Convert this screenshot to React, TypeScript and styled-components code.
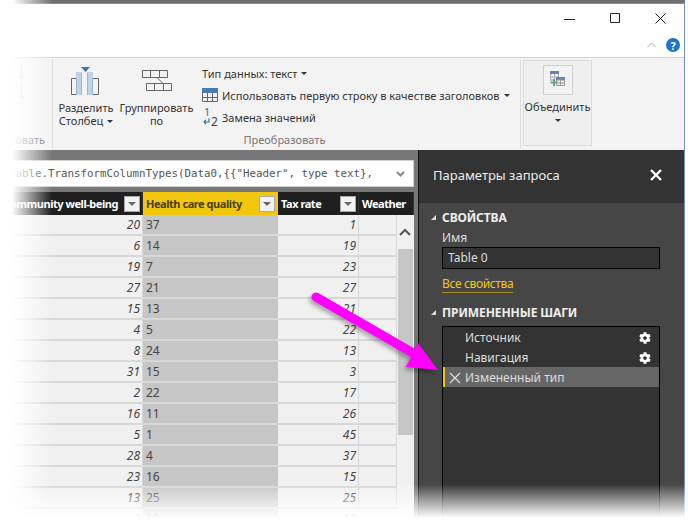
import React from 'react';
import styled, { createGlobalStyle } from 'styled-components';
import { FaCog } from 'react-icons/fa';

const GlobalStyle = createGlobalStyle`
  html, body {
    margin: 0;
    padding: 0;
    background: #fff;
  }
  * {
    box-sizing: border-box;
  }
`;

const UI_FONT = `"Noto Sans", "Open Sans", sans-serif`;

const Page = styled.div`
  position: relative;
  width: 688px;
  height: 524px;
  overflow: hidden;
  background: #fff;
  font-family: ${UI_FONT};
  color: #444;
`;

const Frame = styled.div`
  display: flex;
  flex-direction: column;
  width: 685px;
  height: 524px;
  border-top: 3px solid #6e7073;
  border-right: 1px solid #6d8fd0;
`;

const TitleBar = styled.div`
  display: flex;
  flex-direction: column;
  flex-shrink: 0;
  height: 54px;
  border-top: 1px solid #6d8fd0;
  background: #fff;
`;

const WindowButtons = styled.div`
  display: flex;
  justify-content: flex-end;
  gap: 35px;
  height: 31px;
  padding: 9px 18px 0 0;
`;

const TabRow = styled.div`
  display: flex;
  justify-content: flex-end;
  align-items: center;
  gap: 10px;
  height: 21px;
  padding: 0 4px 1px 0;
`;

const HelpBadge = styled.div`
  display: flex;
  align-items: center;
  justify-content: center;
  width: 14px;
  height: 14px;
  border-radius: 50%;
  background: #1d74c9;
  color: #fff;
  font-size: 11px;
  font-weight: 700;
  line-height: 1;
`;

const Ribbon = styled.div`
  display: flex;
  flex-shrink: 0;
  height: 93px;
  padding: 2px 0 2px;
  border-top: 1px solid #d4d4d4;
  background: #f3f3f3;
`;

const FadedGroup = styled.div`
  display: flex;
  flex-direction: column;
  justify-content: space-between;
  align-items: flex-end;
  width: 53px;
  padding: 5px 7px 0 0;
  border-right: 1px solid #dcdcdc;
`;

const FadedArrows = styled.div`
  display: flex;
  flex-direction: column;
  gap: 4px;
  margin-right: 20px;
`;

const GroupLabel = styled.div<{ $shift?: number }>`
  height: 16px;
  padding-right: ${p => p.$shift || 0}px;
  font-size: 11px;
  line-height: 15px;
  color: #777;
  text-align: center;
`;

const TransformGroup = styled.div`
  display: flex;
  flex-direction: column;
  justify-content: space-between;
  width: 468px;
  border-right: 1px solid #dcdcdc;
`;

const TransformBody = styled.div`
  display: flex;
`;

const BigButton = styled.div<{ $width: number }>`
  display: flex;
  flex-direction: column;
  align-items: center;
  width: ${p => p.$width}px;
  height: 70px;
  font-size: 11px;
  line-height: 13px;
  color: #333;
  text-align: center;
`;

const BigIcon = styled.div<{ $lift?: number }>`
  display: flex;
  align-items: flex-end;
  justify-content: center;
  height: 36px;
  margin-bottom: 5px;
  padding-bottom: ${p => p.$lift || 0}px;
`;

const Caret = styled.span`
  display: inline-block;
  width: 0;
  height: 0;
  margin-left: 4px;
  vertical-align: 2px;
  border-left: 3px solid transparent;
  border-right: 3px solid transparent;
  border-top: 3px solid #333;
`;

const MergeCaret = styled(Caret)`
  margin-left: 0;
`;

const SmallButtons = styled.div`
  display: flex;
  flex-direction: column;
  padding: 2px 0 0 8px;
`;

const SmallButton = styled.div`
  display: flex;
  align-items: center;
  gap: 4px;
  height: 22px;
  font-size: 11px;
  color: #333;
  white-space: nowrap;

  ${Caret} {
    margin-left: 0;
  }
`;

const MergeGroup = styled.div`
  display: flex;
  flex-direction: column;
  align-items: center;
  width: 69px;
  height: 86px;
  margin-left: 2px;
  padding-top: 4px;
  border: 1px solid #dcdcdc;
  background: #efefef;
  font-size: 11px;
  line-height: 13px;
  color: #333;
`;

const MergeIconBox = styled.div`
  display: flex;
  align-items: flex-start;
  justify-content: center;
  flex-shrink: 0;
  width: 30px;
  height: 30px;
  margin-bottom: 5px;
  padding-top: 4px;
  border: 1px solid #cfcfcf;
  background: #f3f3f3;
`;

const Main = styled.div`
  display: flex;
  flex: 1;
  min-height: 0;
`;

const Editor = styled.div`
  display: flex;
  flex-direction: column;
  width: 418px;
  padding-right: 4px;
  background: #777;
`;

const FormulaBar = styled.div`
  display: flex;
  align-items: center;
  justify-content: space-between;
  height: 27px;
  margin-top: 10px;
  padding: 0 8px;
  border: 1px solid #d0d0d0;
  background: #fff;
  font-family: "DejaVu Sans Mono", "Liberation Mono", monospace;
  font-size: 10.8px;
  color: #555;
  white-space: nowrap;
`;

const TableWrap = styled.div`
  position: relative;
  flex: 1;
  min-height: 0;
  margin-top: 5px;
  overflow: hidden;
  background: #f0f0f0;
`;

const HeadRow = styled.div`
  display: grid;
  grid-template-columns: 143px 135px 81px 55px;
  height: 23px;
  background: #1f1f1f;
`;

const HeadCell = styled.div<{ $active?: boolean }>`
  display: flex;
  align-items: center;
  justify-content: space-between;
  min-width: 0;
  padding: 0 2px 0 3px;
  border-right: 1px solid ${p => (p.$active ? '#f2c80f' : '#333')};
  background: ${p => (p.$active ? '#f2c80f' : 'transparent')};
  color: ${p => (p.$active ? '#4a3f08' : '#fff')};
  font-size: 11px;
  font-weight: 700;
  letter-spacing: -0.45px;
  white-space: nowrap;
  overflow: hidden;
`;

const HeadCommunity = styled(HeadCell)`
  justify-content: flex-end;
  gap: 6px;
`;

const FilterButton = styled.div`
  display: flex;
  flex-shrink: 0;
  align-items: center;
  justify-content: center;
  width: 16px;
  height: 16px;
  border: 1px solid #aaa;
  background: #f2f2f2;

  &::after {
    content: '';
    border-left: 4px solid transparent;
    border-right: 4px solid transparent;
    border-top: 4px solid #666;
  }
`;

const Row = styled.div`
  display: grid;
  grid-template-columns: 143px 135px 81px 38px;
  width: 397px;
  height: 21px;
  border-bottom: 2px solid #d8d8d8;
`;

const NumCell = styled.div<{ $selected?: boolean }>`
  padding: ${p => (p.$selected ? '0 0 0 3px' : '0 2px 0 0')};
  border-right: ${p => (p.$selected ? 'none' : '1px solid #d8d8d8')};
  background: ${p => (p.$selected ? '#c6c6c6' : 'transparent')};
  font-size: 12px;
  font-style: ${p => (p.$selected ? 'normal' : 'italic')};
  line-height: 19px;
  text-align: ${p => (p.$selected ? 'left' : 'right')};
  color: #444;
`;

const ScrollUp = styled.div`
  position: absolute;
  top: 36px;
  left: 399px;
  display: flex;
`;

const ScrollThumb = styled.div`
  position: absolute;
  top: 57px;
  left: 398px;
  width: 15px;
  height: 186px;
  background: #c6c6c6;
`;

const Panel = styled.div`
  display: flex;
  flex-direction: column;
  flex: 1;
  min-width: 0;
  border-left: 1px solid #111;
  background: #464646;
`;

const PanelHead = styled.div`
  display: flex;
  align-items: center;
  justify-content: space-between;
  flex-shrink: 0;
  height: 53px;
  padding: 0 22px 3px 14px;
  background: #333;
  color: #eee;
  font-size: 13px;
`;

const PanelBody = styled.div`
  display: flex;
  flex-direction: column;
  flex: 1;
  min-height: 0;
  padding: 5px 24px 0 12px;
`;

const SectionTitle = styled.div`
  display: flex;
  align-items: center;
  gap: 6px;
  height: 18px;
  color: #eee;
  font-size: 12px;
  font-weight: 700;
  letter-spacing: -0.1px;

  &::before {
    content: '';
    border-left: 5px solid transparent;
    border-bottom: 5px solid #ddd;
  }
`;

const FieldLabel = styled.div`
  margin: 3px 0 0 11px;
  color: #ddd;
  font-size: 12px;
  line-height: 18px;
`;

const NameInput = styled.div`
  flex-shrink: 0;
  height: 22px;
  margin: 0 0 0 11px;
  padding-left: 5px;
  border: 1px solid #000;
  background: #333;
  color: #ddd;
  font-size: 12px;
  line-height: 20px;
`;

const AllProps = styled.a`
  align-self: flex-start;
  margin: 7px 0 10px 11px;
  border-bottom: 1px solid #a58c1c;
  color: #f2c80f;
  font-size: 12px;
  letter-spacing: -0.35px;
  line-height: 16px;
`;

const Steps = styled.div`
  flex: 1;
  min-height: 0;
  margin: 5px 0 0 11px;
  border: 1px solid #000;
  border-bottom: none;
  background: #333;
`;

const Step = styled.div<{ $current?: boolean }>`
  display: flex;
  align-items: center;
  justify-content: space-between;
  height: 20px;
  padding: 1px 8px 0 ${p => (p.$current ? '4px' : '22px')};
  border-left: ${p => (p.$current ? '2px solid #f2c80f' : 'none')};
  background: ${p => (p.$current ? '#666' : 'transparent')};
  color: #ddd;
  font-size: 12px;
`;

const StepName = styled.div`
  display: flex;
  align-items: center;
  gap: 4px;
`;

const FadeLeft = styled.div`
  position: absolute;
  top: 0;
  left: 0;
  width: 52px;
  height: 100%;
  background: linear-gradient(to right, #fff 12px, rgba(255, 255, 255, 0));
  pointer-events: none;
`;

const FadeBottom = styled.div`
  position: absolute;
  left: 0;
  bottom: 0;
  width: 100%;
  height: 40px;
  background: linear-gradient(to bottom, rgba(255, 255, 255, 0), #fff 34px);
  pointer-events: none;
`;

const Arrow = styled.svg`
  position: absolute;
  top: 285px;
  left: 305px;
  filter: drop-shadow(-2px 3px 2px rgba(0, 0, 0, 0.3));
`;

const community = [20, 6, 19, 27, 15, 4, 8, 31, 2, 16, 5, 28, 23, 13, 2];
const health = [37, 14, 7, 21, 13, 5, 24, 15, 22, 11, 1, 4, 16, 25, 10];
const tax = [1, 19, 23, 27, 21, 22, 13, 3, 17, 26, 45, 37, 15, 25, 12];

const SplitIcon = () => (
  <svg width="30" height="30" viewBox="0 0 30 30">
    <path d="M10 1h9l-4.5 5z" fill="#3f74a8" />
    <rect x="5" y="6" width="6" height="23" fill="#bdd3e8" />
    <rect x="16" y="6" width="6" height="23" fill="#bdd3e8" />
    <path d="M.5 12.5h5v16h-5zM21.5 12.5h6v16h-6z" fill="none" stroke="#666" />
    <path d="M5.5 12v17M10.5 7v22M16.5 7v22M21.5 12v17" stroke="#9db6cc" fill="none" />
  </svg>
);

const GroupIcon = () => (
  <svg width="30" height="21" viewBox="0 0 30 21">
    <path
      d="M.5 .5h25v7h-25zM8.5 .5v7M17.5 .5v7M4.5 13.5h25v7h-25zM12.5 13.5v7M21.5 13.5v7M15 7.5l6 6"
      fill="none"
      stroke="#666"
    />
  </svg>
);

const HeaderRowIcon = () => (
  <svg width="16" height="14" viewBox="0 0 16 14">
    <rect width="16" height="5" fill="#4a7ab0" />
    <path d="M.5 5v8.5h15V5M.5 9.5h15M5.5 5v8.5M10.5 5v8.5" fill="none" stroke="#666" />
  </svg>
);

const ReplaceIcon = () => (
  <svg width="16" height="22" viewBox="0 0 16 22">
    <text x="2" y="10" fontSize="11" fontFamily="Noto Sans, sans-serif" fill="#666">1</text>
    <text x="9" y="20" fontSize="12" fontFamily="Noto Sans, sans-serif" fill="#444">2</text>
    <path d="M7 12.5v3.5H2M4 14l-2 2 2 2" fill="none" stroke="#2a74b8" strokeWidth="1.2" />
  </svg>
);

const MergeIcon = () => (
  <svg width="17" height="17" viewBox="0 0 17 17">
    <rect x="1" y="1" width="9" height="3" fill="#5a87b8" />
    <path d="M1.5 4v7M9.5 4v3M1.5 7h8M1.5 10h4M5.5 4v7" fill="none" stroke="#aaa" />
    <rect x="7" y="7" width="9" height="3" fill="#5a87b8" />
    <path d="M7.5 10v5.5h8V10h-8M7.5 13h8M11.5 10v5" fill="none" stroke="#999" />
    <path d="M5 9v7M1.5 12.5h7" stroke="#5fa88a" strokeWidth="2" fill="none" />
  </svg>
);

const App = () => {
  return (
    <Page>
      <GlobalStyle />
      <Frame>
        <TitleBar>
          <WindowButtons>
            <svg width="11" height="11" viewBox="0 0 11 11"><path d="M0 6.5h11" stroke="#222" /></svg>
            <svg width="10" height="11" viewBox="0 0 10 11"><path d="M.5 .5h9v9h-9z" fill="none" stroke="#222" /></svg>
            <svg width="11" height="11" viewBox="0 0 11 11"><path d="M.5 .5l10 10M10.5 .5l-10 10" stroke="#222" /></svg>
          </WindowButtons>
          <TabRow>
            <svg width="9" height="6" viewBox="0 0 9 6"><path d="M.5 5l4-4 4 4" fill="none" stroke="#aaa" /></svg>
            <HelpBadge>?</HelpBadge>
          </TabRow>
        </TitleBar>
        <Ribbon>
          <FadedGroup>
            <FadedArrows>
              <svg width="7" height="16" viewBox="0 0 7 16"><path d="M3.5 0v14M.5 11l3 3 3-3" fill="none" stroke="#ccc" /></svg>
              <svg width="7" height="16" viewBox="0 0 7 16"><path d="M3.5 0v14M.5 11l3 3 3-3" fill="none" stroke="#ccc" /></svg>
            </FadedArrows>
            <GroupLabel>овать</GroupLabel>
          </FadedGroup>
          <TransformGroup>
            <TransformBody>
              <BigButton $width={66}>
                <BigIcon><SplitIcon /></BigIcon>
                <div>Разделить</div>
                <div>Столбец<Caret /></div>
              </BigButton>
              <BigButton $width={75}>
                <BigIcon $lift={5}><GroupIcon /></BigIcon>
                <div>Группировать</div>
                <div>по</div>
              </BigButton>
              <SmallButtons>
                <SmallButton>Тип данных: текст<Caret /></SmallButton>
                <SmallButton><HeaderRowIcon />Использовать первую строку в качестве заголовков<Caret /></SmallButton>
                <SmallButton><ReplaceIcon />Замена значений</SmallButton>
              </SmallButtons>
            </TransformBody>
            <GroupLabel $shift={4}>Преобразовать</GroupLabel>
          </TransformGroup>
          <MergeGroup>
            <MergeIconBox><MergeIcon /></MergeIconBox>
            <div>Объединить</div>
            <div><MergeCaret /></div>
          </MergeGroup>
        </Ribbon>
        <Main>
          <Editor>
            <FormulaBar>
              <span>Table.TransformColumnTypes(Data0,{'{{'}"Header", type text{'}'},</span>
              <svg width="9" height="6" viewBox="0 0 9 6"><path d="M1 1l3.5 3.5L8 1" fill="none" stroke="#888" strokeWidth="2" /></svg>
            </FormulaBar>
            <TableWrap>
              <HeadRow>
                <HeadCommunity>Community well-being<FilterButton /></HeadCommunity>
                <HeadCell $active>Health care quality<FilterButton /></HeadCell>
                <HeadCell>Tax rate<FilterButton /></HeadCell>
                <HeadCell>Weather</HeadCell>
              </HeadRow>
              {community.map((value, idx) => (
                <Row key={idx}>
                  <NumCell>{value}</NumCell>
                  <NumCell $selected>{health[idx]}</NumCell>
                  <NumCell>{tax[idx]}</NumCell>
                  <NumCell />
                </Row>
              ))}
              <ScrollUp>
                <svg width="12" height="8" viewBox="0 0 12 8"><path d="M1 7l5-5 5 5" fill="none" stroke="#555" strokeWidth="2" /></svg>
              </ScrollUp>
              <ScrollThumb />
            </TableWrap>
          </Editor>
          <Panel>
            <PanelHead>
              Параметры запроса
              <svg width="12" height="12" viewBox="0 0 12 12"><path d="M1 1l10 10M11 1L1 11" stroke="#fff" strokeWidth="2.4" /></svg>
            </PanelHead>
            <PanelBody>
              <SectionTitle>СВОЙСТВА</SectionTitle>
              <FieldLabel>Имя</FieldLabel>
              <NameInput>Table 0</NameInput>
              <AllProps>Все свойства</AllProps>
              <SectionTitle>ПРИМЕНЕННЫЕ ШАГИ</SectionTitle>
              <Steps>
                <Step>Источник<FaCog size={12} color="#fff" /></Step>
                <Step>Навигация<FaCog size={12} color="#fff" /></Step>
                <Step $current>
                  <StepName>
                    <svg width="12" height="12" viewBox="0 0 12 12"><path d="M1 1l10 10M11 1L1 11" stroke="#ddd" strokeWidth="1.2" /></svg>
                    Измененный тип
                  </StepName>
                </Step>
              </Steps>
            </PanelBody>
          </Panel>
        </Main>
      </Frame>
      <FadeLeft />
      <FadeBottom />
      <Arrow width="140" height="95" viewBox="0 0 140 95">
        <path d="M11 12L108 68" stroke="#ff00ff" strokeWidth="9" strokeLinecap="round" fill="none" />
        <path d="M133 85L113 58L101 82z" fill="#ff00ff" />
      </Arrow>
    </Page>
  );
};

export default App;
